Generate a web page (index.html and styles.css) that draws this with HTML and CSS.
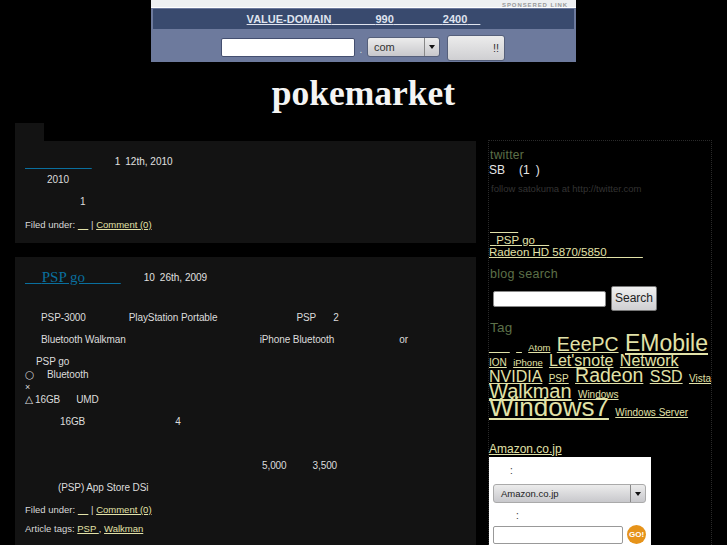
FILE: index.html
```html
<!DOCTYPE html>
<html lang="ja">
<head>
<meta charset="utf-8">
<title>pokemarket</title>
<link rel="stylesheet" href="styles.css">
</head>
<body>
<div class="page">
  <header class="head">
    <div class="ad">
      <div class="ad-top"><span class="ad-label">SPONSERED LINK</span></div>
      <div class="ad-band"><a class="ad-link" href="#">VALUE-DOMAIN<span class="u41">&nbsp;</span>990<span class="u46">&nbsp;</span>2400<span class="u10">&nbsp;</span></a></div>
      <form class="ad-form">
        <input class="ad-input" type="text">
        <span class="ad-dot">.</span>
        <div class="select ad-select"><span class="select-text">com</span><span class="select-arrow"></span></div>
        <button class="ad-btn" type="button">!!</button>
      </form>
    </div>
    <h1 class="title">pokemarket</h1>
  </header>
  <div class="columns">
    <main class="main">
      <div class="tab"></div>
      <article class="post post-one">
        <div class="post-head"><a class="post-title" href="#"><span class="u63">&nbsp;</span></a><span class="date d-one">1<span class="g g5"></span>12th, 2010</span></div>
        <p class="line l-one">2010</p>
        <p class="line l-two">1</p>
        <p class="meta">Filed under: <a href="#">&nbsp;&nbsp;&nbsp;&nbsp;</a> | <a href="#">Comment (0)</a></p>
      </article>
      <article class="post post-two">
        <div class="post-head"><a class="post-title" href="#"><span class="u13">&nbsp;</span>PSP go<span class="u32">&nbsp;</span></a><span class="date d-two">10<span class="g g5"></span>26th, 2009</span></div>
        <p class="line a1">PSP-3000<span class="g g43"></span>PlayStation Portable<span class="g g79"></span>PSP<span class="g g17"></span>2</p>
        <p class="line a1">Bluetooth Walkman<span class="g g134"></span>iPhone Bluetooth<span class="g g65"></span>or</p>
        <p class="line a2 tight">PSP go<br><span class="mark">○</span><span class="g g12"></span>Bluetooth<br><span class="small-x">×</span><br><span class="mark">△</span>16GB<span class="g g16"></span>UMD</p>
        <p class="line a3">16GB<span class="g g90"></span>4</p>
        <p class="line a4">5,000<span class="g g26"></span>3,500</p>
        <p class="line a5">(PSP) App Store DSi</p>
        <p class="meta">Filed under: <a href="#">&nbsp;&nbsp;&nbsp;&nbsp;</a> | <a href="#">Comment (0)</a></p>
        <p class="meta tags">Article tags: <a href="#">PSP </a>, <a href="#">Walkman</a></p>
      </article>
    </main>
    <aside class="side">
      <h2 class="side-title t-twitter">twitter</h2>
      <p class="tweet">SB<span class="g g14"></span>(1<span class="g g6"></span>)</p>
      <p class="follow">follow satokuma at http://twitter.com</p>
      <ul class="recent">
        <li class="in1"><a href="#"><span class="r25">&nbsp;</span></a></li>
        <li class="in1"><a href="#"><span class="r3">&nbsp;</span>PSP go<span class="r11">&nbsp;</span></a></li>
        <li><a href="#">Radeon HD 5870/5850<span class="r33">&nbsp;</span></a></li>
      </ul>
      <h2 class="side-title t-search">blog search</h2>
      <form class="search"><input class="search-input" type="text"><button class="search-btn" type="button">Search</button></form>
      <h2 class="side-title t-tag">Tag</h2>
      <div class="cloud">
        <a class="s10" href="#"><span class="c18">&nbsp;</span></a> <a class="s10" href="#"><span class="c3">&nbsp;</span></a> <a class="s9" href="#">Atom</a> <a class="s19" href="#">EeePC</a> <a class="s23" href="#">EMobile</a> <a class="s10" href="#">ION</a> <a class="s9" href="#">iPhone</a> <a class="s16" href="#">Let'snote</a> <a class="s16" href="#">Network</a> <a class="s16" href="#">NVIDIA</a> <a class="s10" href="#">PSP</a> <a class="s19" href="#">Radeon</a> <a class="s16" href="#">SSD</a> <a class="s10" href="#">Vista</a> <a class="s20" href="#">Walkman</a> <a class="s10" href="#">Windows</a> <a class="s26" href="#">Windows7</a> <a class="s10" href="#">Windows Server</a>
      </div>
      <p class="amazon-link"><a href="#">Amazon.co.jp</a></p>
      <div class="amazon">
        <p class="am-label l1">:</p>
        <div class="select am-select"><span class="select-text">Amazon.co.jp</span><span class="select-arrow"></span></div>
        <p class="am-label l2">:</p>
        <div class="am-row"><input class="am-input" type="text"><span class="go">GO!</span></div>
      </div>
    </aside>
  </div>
</div>
</body>
</html>
```
FILE: styles.css
```css
html, body { margin: 0; padding: 0; background: #000; }
body { font-family: "Liberation Sans", Arial, sans-serif; font-size: 10px; color: #d8d8d8; }
.page { width: 727px; height: 545px; overflow: hidden; }
a { color: #e2e2a8; }
p { margin: 0; }
.g { display: inline-block; }
.g5 { width: 5px; } .g6 { width: 6px; } .g12 { width: 12px; } .g14 { width: 14px; }
.g16 { width: 16px; } .g17 { width: 17px; } .g26 { width: 26px; }
.g43 { width: 43px; } .g65 { width: 65px; } .g79 { width: 79px; } .g90 { width: 90px; } .g134 { width: 134px; }
.u10 { letter-spacing: 10px; } .u41 { letter-spacing: 41px; } .u46 { letter-spacing: 46px; }
.u13 { letter-spacing: 13px; } .u32 { letter-spacing: 32px; } .u63 { letter-spacing: 63px; }
.r3 { letter-spacing: 3px; } .r11 { letter-spacing: 11px; } .r25 { letter-spacing: 25px; } .r33 { letter-spacing: 33px; }
.c18 { letter-spacing: 18px; } .c3 { letter-spacing: 3px; }

/* ad */
.ad { width: 425px; height: 62px; margin-left: 151px; background: #6d7a9d; display: flex; flex-direction: column; }
.ad-top { height: 7px; background: #eef0f2; border-bottom: 1px solid #fff; text-align: right; padding-right: 8px; line-height: 7px; overflow: hidden; }
.ad-label { font-size: 6px; color: #9a9a9a; letter-spacing: .9px; font-weight: bold; }
.ad-band { height: 20px; margin: 1px 2px 0; background: #394a6e; display: flex; justify-content: center; }
.ad-link { font: bold 11px/20px "Liberation Sans", sans-serif; color: #dfe3ee; }
.ad-form { display: flex; align-items: flex-start; padding: 6px 0 0 70px; }
.ad-input { width: 134px; height: 19px; margin: 3px 0 0; padding: 0; box-sizing: border-box; background: #fff; border: 1px solid #444f70; border-radius: 2px; }
.ad-dot { width: 12px; color: #cdd; text-align: center; margin-top: 9px; }
.select { display: flex; box-sizing: border-box; background: linear-gradient(#ececec, #c8c8cc); border: 1px solid #555f7a; border-radius: 3px; color: #333; }
.select-text { flex: 1; }
.select-arrow { width: 14px; border-left: 1px solid #888; position: relative; }
.select-arrow::after { content: ""; position: absolute; left: 4px; top: 7px; border: 3px solid transparent; border-top: 4px solid #111; border-bottom: 0; }
.ad-select { width: 73px; height: 20px; margin-top: 2px; font-size: 11px; line-height: 19px; }
.ad-select .select-text { padding-left: 6px; }
.ad-btn { width: 58px; height: 26px; margin: 0 0 0 7px; padding: 0 5px 0 0; text-align: right; box-sizing: border-box; background: linear-gradient(#ececec, #cfcfd2); border: 1px solid #555f7a; border-radius: 3px; color: #333; font: 11px "Liberation Sans", sans-serif; }
.title { margin: 0; height: 61px; font: bold 35.5px/63px "Liberation Serif", serif; color: #f4f4f4; text-align: center; }

/* layout */
.columns { display: flex; padding-left: 15px; gap: 12px; }
.main { width: 461px; flex: none; }
.tab { width: 29px; height: 18px; background: #131313; }
.post { background: #131313; padding: 0 10px; box-sizing: border-box; }
.post-one { height: 102px; margin-bottom: 14px; padding-top: 12px; }
.post-two { height: 300px; padding-top: 11px; }
.post-head { display: flex; align-items: baseline; height: 19px; }
.post-title { font: 15px/18px "Liberation Serif", serif; color: #0a6f9e; white-space: pre; }
.date { line-height: 13px; color: #e0e0e0; }
.d-one { margin-left: 23px; position: relative; top: -2px; }
.d-two { margin-left: 23px; position: relative; top: -1px; }
.line { line-height: 13px; color: #dcdcdc; white-space: nowrap; letter-spacing: -.1px; }
.l-one { padding-left: 22px; margin-top: 1px; }
.l-two { padding-left: 55px; margin-top: 9px; }
.meta { font-size: 9.5px; line-height: 13px; color: #d8d8d8; }
.post-one .meta { margin-top: 10px; }
.a1 { padding-left: 16px; margin-bottom: 9px; }
.post-two .a1:first-of-type { margin-top: 24px; }
.a2 { padding-left: 11px; margin-top: 10px; }
.tight { line-height: 12.5px; }
.mark { margin-left: -11px; display: inline-block; width: 10px; font-family: "DejaVu Sans", sans-serif; font-size: 10.5px; line-height: 10px; }
.small-x { margin-left: -11px; font-size: 9px; }
.a3 { padding-left: 35px; margin-top: 9px; }
.a4 { padding-left: 237px; margin-top: 31px; }
.a5 { padding-left: 33px; margin-top: 9px; }
.post-two .meta { margin-top: 9px; }
.post-two .tags { margin-top: 6px; }

/* sidebar */
.side { width: 224px; height: 405px; box-sizing: border-box; margin-top: 17px; padding-top: 1px; border: 1px dotted #2a2a2a; border-bottom: 0; }
.side-title { margin: 0; padding-left: 1px; font: 12px/16px "Liberation Sans", sans-serif; color: #5d7049; letter-spacing: .3px; }
.t-twitter { margin-top: 5px; }
.tweet { font-size: 12px; line-height: 14px; color: #e6e6e6; }
.follow { margin-top: 6px; padding-left: 2px; font-size: 9.5px; line-height: 12px; color: #333; }
.recent { list-style: none; margin: 26px 0 0; padding: 0; font-size: 11.5px; line-height: 13px; }
.recent li { height: 12.5px; }
.recent .in1 { padding-left: 1px; }
.t-search { margin-top: 7px; font-size: 12.5px; }
.search { display: flex; align-items: center; padding: 4px 0 0 4px; }
.search-input { width: 113px; height: 16px; padding: 0; margin: 2px 0 0; box-sizing: border-box; border: 1px solid #888; border-radius: 2px; background: #fff; }
.search-btn { width: 46px; height: 25px; margin: 0 0 0 5px; padding: 0; background: linear-gradient(#f0f0f0, #cfcfd2); border: 1px solid #777; border-radius: 2px; font: 12px "Liberation Sans", sans-serif; color: #222; }
.t-tag { margin-top: 9px; font-size: 13.5px; }
.cloud { margin-top: 1px; font-size: 12px; line-height: 13px; word-spacing: 3px; }
.cloud a { line-height: 13px; word-spacing: 0; }
.s9 { font-size: 9.5px; } .s10 { font-size: 10px; } .s16 { font-size: 16px; } .s19 { font-size: 19.5px; } .s20 { font-size: 20px; } .s23 { font-size: 23px; } .s26 { font-size: 26px; }
.amazon-link { margin-top: 23px; font-size: 12px; line-height: 14px; color: #e2e2a8; }
.amazon { width: 162px; height: 92px; background: #fff; margin-top: 1px; color: #333; box-sizing: border-box; padding-left: 4px; }
.am-label { font-size: 10px; line-height: 12px; }
.l1 { padding: 8px 0 0 17px; }
.l2 { padding: 7px 0 0 23px; }
.am-select { width: 153px; height: 19px; margin-top: 7px; font-size: 9.5px; line-height: 18px; border-color: #aaa; color: #222; }
.am-select .select-text { padding-left: 7px; }
.am-row { display: flex; align-items: flex-start; gap: 4px; margin-top: 3px; }
.am-input { width: 130px; height: 18px; padding: 0; margin: 1px 0 0; box-sizing: border-box; background: #fff; border: 1px solid #999; border-radius: 2px; }
.go { width: 19px; height: 19px; flex: none; border-radius: 50%; background: #e6931a; color: #fff; font: bold 8px/19px "Liberation Sans", sans-serif; text-align: center; }
```
